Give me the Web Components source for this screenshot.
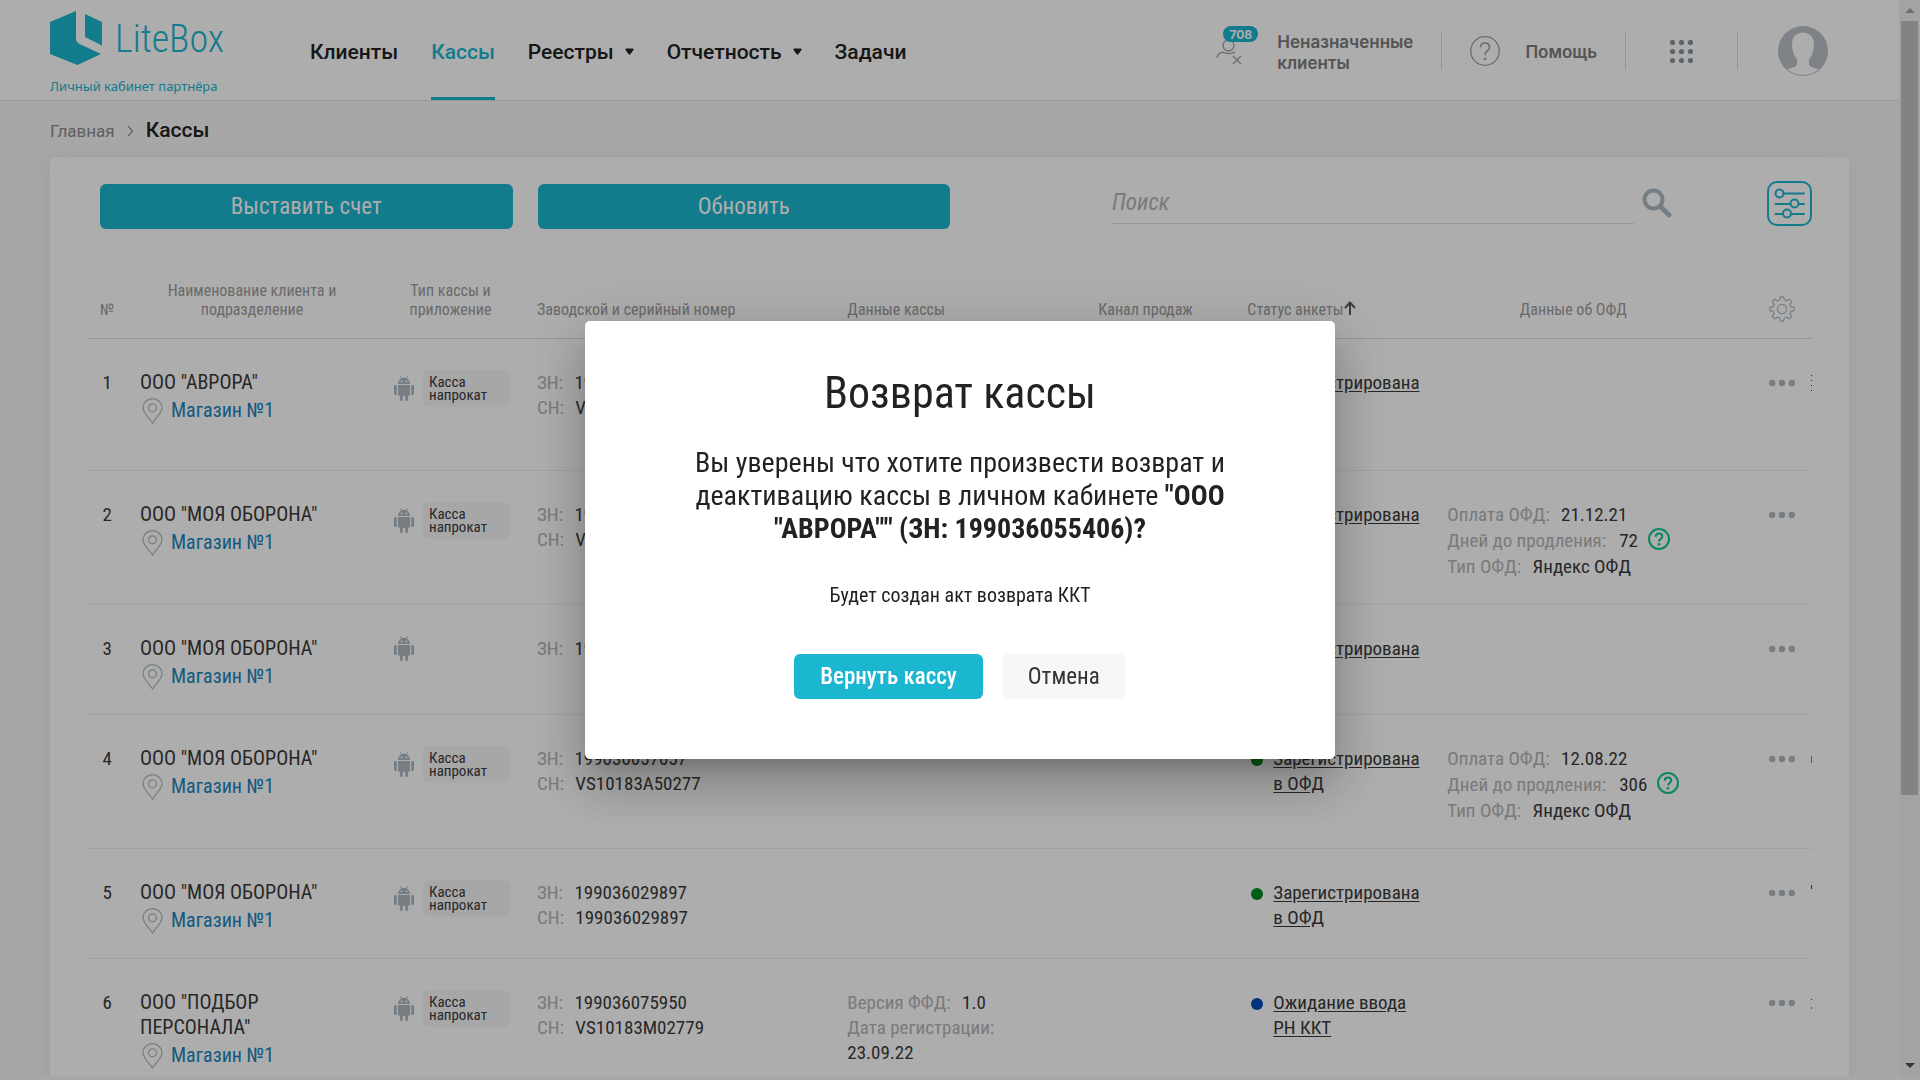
<!DOCTYPE html>
<html lang="ru">
<head>
<meta charset="utf-8">
<meta name="viewport" content="width=device-width, initial-scale=1">
<title>LiteBox — Кассы</title>
<style>
  :root {
    --teal: #1bb6cf;
    --ink: #3a3a3a;
    --muted: #b4b4b4;
    --icon: #aebac2;
    --text: "Roboto Condensed", Roboto, "Liberation Sans", sans-serif;
    --head: Roboto, "Liberation Sans", sans-serif;
  }
  html, body { margin: 0; height: 100%; }
  body { background: #f6f6f6; color: var(--ink); font: 19px/25px var(--text); overflow: hidden; }
</style>
</head>
<body>
<lb-app></lb-app>

<script>
const define = (name, html, setup) => {
  const tpl = document.createElement('template');
  tpl.innerHTML = html;
  customElements.define(name, class extends HTMLElement {
    connectedCallback() {
      if (this.shadowRoot) return;
      this.attachShadow({ mode: 'open' }).append(tpl.content.cloneNode(true));
      if (setup) setup(this, this.shadowRoot);
    }
  });
};

/* ---------- icons ---------- */
const ICONS = {
  logo: ['0 0 52 54', '<path fill="currentColor" d="M0 11 26 0v27c0 3 1 4.500 3.500 6L51 43 27.500 54 0 43zM35 3l17 8v23.500L35 26z"/>'],
  caret: ['0 0 9 7', '<path fill="currentColor" d="M1.500.500h6c1 0 1.300 1 .8 1.800L5.300 6.200c-.4.600-1.200.600-1.600 0L.7 2.300C.2 1.500.5.500 1.500.500z"/>'],
  user: ['0 0 26 26', '<g fill="none" stroke="currentColor" stroke-width="1.300"><circle cx="12.500" cy="7.500" r="5.500"/><path d="M1 20c.5-4 4-6 7-5.500 3 1.500 6 1.500 9 0l2 .3"/><path d="m17 18 8 8m0-8-8 8"/></g>'],
  help: ['0 0 30 30', '<g fill="none" stroke="currentColor" stroke-width="1.300"><circle cx="15" cy="15" r="14.300"/><path stroke-width="1.600" d="M10.500 11.500c0-3 2-4.500 4.500-4.500s4.500 1.600 4.500 4.300c0 3.700-4.500 3.700-4.500 8"/></g><circle cx="15" cy="23" r="1.300" fill="currentColor"/>'],
  grid: ['0 0 23 23', '<g fill="currentColor">' + [2.5, 11.5, 20.5].map(y => [2.5, 11.5, 20.5].map(x => `<circle cx="${x}" cy="${y}" r="2.600"/>`).join('')).join('') + '</g>'],
  avatar: ['0 0 50 50', '<circle cx="25" cy="25" r="25" fill="currentColor"/><path fill="#fff" d="M25 6.500c6 0 11 4 10.800 11 0 3 .4 5-.5 6.500-.8 3.500-2 6.500-4 9-.8 5-.5 7 2 8l7.700 2.300C36.500 46.800 31 49 25 49s-11.500-2.200-16-5.700L16.700 41c2.500-1 3-4 2-8-2-2.500-3.200-5.500-4-9-1-2-.6-4-.5-6.500C14 10.500 19 6.500 25 6.500z"/>'],
  chevron: ['0 0 7 12', '<path fill="none" stroke="currentColor" stroke-width="1.200" d="m1 .8 4.500 5.200L1 11.200"/>'],
  search: ['0 0 30 30', '<circle cx="11.500" cy="11.500" r="9" fill="none" stroke="currentColor" stroke-width="4"/><path stroke="currentColor" stroke-width="4.600" stroke-linecap="round" d="m18.500 18.500 8.500 8.500"/>'],
  filter: ['0 0 45 45', '<g fill="none" stroke="currentColor" stroke-width="2"><rect x="1" y="1" width="43" height="43" rx="9"/><g stroke-linecap="round"><path d="M17 12.500h20M8.500 23H23m9 0h5M8.500 33H15m10 0h12"/></g><circle cx="12.500" cy="12.500" r="4"/><circle cx="27.500" cy="22.500" r="4"/><circle cx="20" cy="32.500" r="4"/></g>'],
  gear: ['0 0 26 26', '<g fill="none" stroke="currentColor" stroke-width="1.200" stroke-linejoin="round"><circle cx="13" cy="13" r="4.600"/><path d="M11.300.8h3.400l.6 3.200 2.300 1 2.700-1.900 2.500 2.500L20.900 8.300l1 2.400 3.200.6v3.400l-3.200.6-1 2.400 1.900 2.700-2.500 2.500-2.700-1.900-2.300 1-.6 3.200h-3.400l-.6-3.200-2.300-1-2.700 1.900-2.500-2.500 1.900-2.700-1-2.400-3.200-.6v-3.400l3.200-.6 1-2.400L3.200 5.600l2.500-2.500L8.400 5l2.300-1z"/></g>'],
  pin: ['0 0 21 26', '<g fill="none" stroke="currentColor" stroke-width="1.200"><path d="M10.500 25C7.500 20 1 15 1 9.800a9.500 9.200 0 0 1 19 0C20 15 13.500 20 10.500 25z"/><circle cx="10.500" cy="9.800" r="4"/></g>'],
  android: ['0 0 20 25', '<g fill="currentColor"><path d="M4 8c0-3 1.600-4.800 3.200-5.600L5.800.4l.5-.4L8 2a7 7 0 0 1 4 0L13.700 0l.5.4-1.400 2C14.400 3.200 16 5 16 8zM4 9h12v9.500c0 .8-.6 1.300-1.300 1.300H5.300C4.600 19.800 4 19.300 4 18.500z"/><rect y="9" width="2.800" height="10" rx="1.200"/><rect x="17.200" y="9" width="2.800" height="10" rx="1.200"/><rect x="6" y="18" width="2.800" height="7" rx="1.200"/><rect x="11.200" y="18" width="2.800" height="7" rx="1.200"/></g><g fill="#fff"><circle cx="7.500" cy="5.300" r=".9"/><circle cx="12.500" cy="5.300" r=".9"/></g>'],
  up: ['0 0 12 14', '<path fill="none" stroke="currentColor" stroke-width="2" d="M6 14V2M1 7l5-5.500L11 7"/>'],
  dots: ['0 0 26 8', '<g fill="currentColor"><circle cx="3.200" cy="4" r="3.200"/><circle cx="13" cy="4" r="3.200"/><circle cx="22.800" cy="4" r="3.200"/></g>'],
  hint: ['0 0 22 22', '<g fill="none" stroke="currentColor" stroke-width="2"><circle cx="11" cy="11" r="10"/><path d="M7.800 8.700c0-2 1.400-3.200 3.200-3.200s3.300 1.200 3.300 3c0 2.300-3.300 2.500-3.300 5"/></g><circle cx="11" cy="16.300" r="1.300" fill="currentColor"/>']
};
define('lb-icon', '<style>:host{display:inline-flex;flex:none}svg{display:block}</style>', (el, root) => {
  const [box, body] = ICONS[el.getAttribute('name')];
  const [, , w, h] = box.split(' ');
  root.innerHTML += `<svg viewBox="${box}" width="${w}" height="${h}" aria-hidden="true">${body}</svg>`;
});

/* ---------- buttons ---------- */
define('lb-button', `
<style>
  :host { display: block; }
  button { box-sizing: border-box; width: 100%; height: 45px; padding: 0 26px; border: 0; border-radius: 6px;
    background: var(--teal); color: #fff; font: var(--weight, 400) 23px/45px var(--text); white-space: nowrap; }
  :host([kind="plain"]) button { background: #f7f7f7; color: #333; }
</style>
<button type="button"><slot></slot></button>`);

/* ---------- header ---------- */
define('lb-nav-item', `
<style>
  :host { display: flex; }
  a { display: flex; align-items: center; gap: 11px; color: #222; text-decoration: none; font: 500 21px/28px var(--head);
    padding-top: 6px; border-bottom: 3px solid transparent; }
  :host([active]) a { color: var(--teal); border-color: var(--teal); }
  lb-icon { display: none; }
  :host([menu]) lb-icon { display: flex; }
</style>
<a href="#"><slot></slot><lb-icon name="caret"></lb-icon></a>`);

define('lb-header', `
<style>
  :host { display: flex; box-sizing: border-box; height: 101px; padding: 0 71px 0 50px; background: #fff; border-bottom: 1px solid #e4e4e4; }
  .logo { flex: 0 0 260px; display: flex; flex-direction: column; padding-top: 11px; color: var(--teal); text-decoration: none; }
  .brand { display: flex; gap: 13px; align-items: flex-start; }
  .word { font: 300 38px/56px var(--text); }
  .sub { margin-top: 10px; font: 13px/18px "Noto Sans", "Open Sans", sans-serif; }
  nav { display: flex; gap: 33px; }
  .tools { margin-left: auto; padding-top: 2px; display: flex; align-items: center; font: 600 17px/21px Inter, var(--head); }
  .tools a { display: flex; align-items: center; color: #7c7c7c; text-decoration: none; }
  .tools a > span { padding-top: 3px; }
  .tools lb-icon { color: #9aa1a8; }
  .who { gap: 35px; }
  .who i { position: relative; display: flex; font-style: normal; }
  .badge { position: absolute; left: 7px; top: -12px; width: 35px; height: 16px; border-radius: 8px; background: var(--teal);
    color: #fff; font: 700 12px/17px Inter, sans-serif; text-align: center; }
  .help { gap: 25px; }
  hr { width: 1px; height: 38px; margin: 0 28px; border: 0; background: #dcdcdc; }
  .tools .apps { margin: 0 16px; color: #8a939c; }
  .tools .face { margin-left: 12px; color: #bcc0c6; }
  button { padding: 0; border: 0; background: none; display: flex; }
</style>
<a class="logo" href="#"><span class="brand"><lb-icon name="logo"></lb-icon><span class="word">LiteBox</span></span><span class="sub">Личный кабинет партнёра</span></a>
<nav>
  <lb-nav-item>Клиенты</lb-nav-item>
  <lb-nav-item active>Кассы</lb-nav-item>
  <lb-nav-item menu>Реестры</lb-nav-item>
  <lb-nav-item menu>Отчетность</lb-nav-item>
  <lb-nav-item>Задачи</lb-nav-item>
</nav>
<div class="tools">
  <a class="who" href="#"><i><lb-icon name="user"></lb-icon><span class="badge">708</span></i><span>Неназначенные<br>клиенты</span></a>
  <hr>
  <a class="help" href="#"><lb-icon name="help"></lb-icon><span>Помощь</span></a>
  <hr>
  <button type="button" aria-label="Приложения"><lb-icon class="apps" name="grid"></lb-icon></button>
  <hr>
  <button type="button" aria-label="Профиль"><lb-icon class="face" name="avatar"></lb-icon></button>
</div>`);

define('lb-breadcrumbs', `
<style>
  :host { display: flex; align-items: baseline; gap: 12px; height: 56px; box-sizing: border-box; padding: 15px 50px 0; font: 500 21px/28px var(--head); color: #222; }
  a { color: #8c8c8c; font: 400 17px/28px var(--head); text-decoration: none; }
  lb-icon { color: #8c8c8c; }
</style>
<a href="#">Главная</a><lb-icon name="chevron"></lb-icon><span>Кассы</span>`);

/* ---------- toolbar ---------- */
define('lb-toolbar', `
<style>
  :host { display: flex; height: 48px; padding: 24px 37px 0 50px; align-items: flex-start; }
  .actions { flex: 850 1 0; display: grid; grid-template-columns: 1fr 1fr; gap: 25px; align-self: flex-end; }
  .search { flex: 560 1 0; display: flex; margin-left: 162px; gap: 8px; color: var(--icon); }
  input { flex: 1; min-width: 0; box-sizing: border-box; height: 43px; padding: 0; border: 0; border-bottom: 1px solid #dedede; background: none;
    font: italic 23px/28px var(--text); color: var(--ink); }
  input::placeholder { color: #b4b4b4; opacity: 1; }
  button { display: flex; padding: 0; border: 0; background: none; color: inherit; }
  .find { padding-top: 7px; }
  .filter { margin-left: 95px; color: var(--teal); }
</style>
<div class="actions"><lb-button>Выставить счет</lb-button><lb-button>Обновить</lb-button></div>
<div class="search"><input type="search" placeholder="Поиск" aria-label="Поиск"><button class="find" type="button" aria-label="Найти"><lb-icon name="search"></lb-icon></button></div>
<button class="filter" type="button" aria-label="Фильтр"><lb-icon name="filter"></lb-icon></button>`);

/* ---------- table ---------- */
const ROWS = [
  { name: 'ООО "АВРОРА"', rent: 1, zn: '199036055406', sn: 'VS10183A50277', st: 'Зарегистрирована в ОФД', tall: 1, edge: 'dots' },
  { name: 'ООО "МОЯ ОБОРОНА"', rent: 1, zn: '199036057657', sn: 'VS10183A50277', st: 'Зарегистрирована в ОФД', ofd: ['21.12.21', 72] },
  { name: 'ООО "МОЯ ОБОРОНА"', zn: '199036029897', st: 'Зарегистрирована в ОФД' },
  { name: 'ООО "МОЯ ОБОРОНА"', rent: 1, zn: '199036057657', sn: 'VS10183A50277', st: 'Зарегистрирована в ОФД', ofd: ['12.08.22', 306], edge: 'arc' },
  { name: 'ООО "МОЯ ОБОРОНА"', rent: 1, zn: '199036029897', sn: '199036029897', st: 'Зарегистрирована в ОФД', edge: 'tick' },
  { name: 'ООО "ПОДБОР ПЕРСОНАЛА"', rent: 1, zn: '199036075950', sn: 'VS10183M02779', st: 'Ожидание ввода РН ККТ', blue: 1, ffd: ['1.0', '23.09.22'], edge: 'pair' }
];
const pair = (l, v) => `<div><span class="l">${l}:</span> ${v}</div>`;
const rowHtml = (r, i) => `<tr class="${r.tall ? 'tall' : ''}">
  <td class="n">${i + 1}</td>
  <td class="name">${r.name}<a class="store" href="#"><lb-icon name="pin"></lb-icon>Магазин №1</a></td>
  <td><div class="type"><lb-icon name="android"></lb-icon>${r.rent ? '<span class="rent">Касса<br>напрокат</span>' : ''}</div></td>
  <td>${pair('ЗН', r.zn)}${r.sn ? pair('СН', r.sn) : ''}</td>
  <td class="data">${r.ffd ? pair('Версия ФФД', r.ffd[0]) + pair('Дата регистрации', r.ffd[1]) : ''}</td>
  <td></td>
  <td><div class="status${r.blue ? ' blue' : ''}"><a href="#">${r.st}</a></div></td>
  <td>${r.ofd ? `<div class="ofd">${pair('Оплата ОФД', r.ofd[0])}<div class="days"><span class="l">Дней до продления:</span>${r.ofd[1]}<lb-icon name="hint"></lb-icon></div>${pair('Тип ОФД', 'Яндекс ОФД')}</div>` : ''}</td>
  <td><div class="act"><button type="button" aria-label="Действия"><lb-icon name="dots"></lb-icon></button><i class="${r.edge || ''}"></i></div></td>
</tr>`;
define('lb-table', `
<style>
  :host { display: block; margin: 52px 37px 0 38px; }
  table { width: 100%; table-layout: fixed; border-collapse: separate; border-spacing: 0; }
  th { padding: 0 0 19px 12px; border-bottom: 1px solid #dedede; vertical-align: bottom; text-align: left; font: 400 16px/19px var(--text); color: #9c9c9c; }
  th.c { text-align: center; padding: 0 4px 19px 0; }
  th.n { text-align: right; padding-right: 17px; }
  th lb-icon { color: #5c5c5c; }
  th.set { text-align: right; padding: 0 17px 12px 0; }
  th.set button { color: var(--icon); } th.set lb-icon { color: inherit; }
  td { padding: 31px 0 22px 12px; border-bottom: 1px solid #f0f0f0; vertical-align: top; }
  .tall td { height: 78px; }
  td.n { text-align: right; padding-right: 16px; padding-left: 0; }
  td.name { padding-right: 40px; font-size: 20px; }
  .l { color: var(--muted); margin-right: 7px; }
  a { color: inherit; text-underline-offset: 2px; }
  .store { display: flex; align-items: center; height: 31px; gap: 8px; padding-left: 2px; color: #1a86c0; text-decoration: none; white-space: nowrap; }
  .store lb-icon, .type lb-icon, .act lb-icon { color: var(--icon); }
  .type { display: flex; align-items: center; gap: 9px; padding-left: 2px; }
  .rent { box-sizing: border-box; width: 87px; height: 37px; padding: 6px 6px 0; border-radius: 6px; background: #f6f6f6; font-size: 15px; line-height: 13px; }
  .data { padding-right: 60px; }
  .status { display: flex; gap: 10px; padding: 0 12px 0 4px; }
  .status a { flex: 1; }
  .status::before { content: ""; flex: none; width: 12px; height: 12px; margin-top: 8px; border-radius: 50%; background: #008a20; }
  .status.blue::before { background: #004bbc; }
  .ofd { padding-bottom: 3px; }
  .days { display: flex; height: 27px; line-height: 27px; }
  .days .l { margin-right: 13px; }
  .days lb-icon { margin: 1px 0 0 10px; color: #10c594; }
  .act { display: flex; justify-content: flex-end; align-items: center; gap: 16px; height: 25px; }
  .act i { width: 1px; height: 16px; }
  .act i.dots { background: repeating-linear-gradient(#444 0 1px, transparent 1px 5px); }
  .act i.arc { background: linear-gradient(transparent 5px, #a97a3a 5px 12px, transparent 12px); }
  .act i.tick { background: linear-gradient(#444 4px, transparent 4px); }
  .act i.pair { background: linear-gradient(transparent 4px, #444 4px 5px, transparent 5px 12px, #1a86c0 12px 14px, transparent 14px); }
  button { padding: 0; border: 0; background: none; display: inline-flex; }
  col:nth-child(1) { width: 40px; } col:nth-child(2) { width: 252px; } col:nth-child(3) { width: 145px; }
  col:nth-child(4) { width: 18%; } col:nth-child(5) { width: 251px; } col:nth-child(6) { width: 149px; }
  col:nth-child(7) { width: 200px; } col:nth-child(8) { width: 280px; }
</style>
<table>
  <colgroup><col><col><col><col><col><col><col><col><col></colgroup>
  <thead><tr>
    <th class="n">№</th><th class="c">Наименование клиента и<br>подразделение</th><th class="c">Тип кассы и<br>приложение</th>
    <th>Заводской и серийный номер</th><th>Данные кассы</th><th>Канал продаж</th><th>Статус анкеты<lb-icon name="up"></lb-icon></th>
    <th class="c">Данные об ОФД</th><th class="set"><button type="button" aria-label="Настройка"><lb-icon name="gear"></lb-icon></button></th>
  </tr></thead>
  <tbody></tbody>
</table>`, (el, root) => { root.querySelector('tbody').innerHTML = ROWS.map(rowHtml).join(''); });

define('lb-card', `
<style>:host { display: block; margin: 0 50px; background: #fff; border-radius: 6px; box-shadow: 0 0 19px rgba(0,0,0,.06); padding-bottom: 40px; }</style>
<slot></slot>`);

/* ---------- scroll rail ---------- */
define('lb-rail', `
<style>
  :host { display: flex; flex-direction: column; flex: 0 0 21px; background: #f1f1f1; }
  .end { height: 21px; display: flex; align-items: center; justify-content: center; }
  .end::before { content: ""; border: 5px solid transparent; }
  .up::before { border-top: 0; border-bottom-color: #a3a3a3; }
  .down::before { border-bottom: 0; border-top-color: #505050; }
  .track { flex: 1; display: flex; flex-direction: column; padding: 0 2px; }
  .thumb { flex: 773; background: #c1c1c1; }
  .rest { flex: 260; }
</style>
<div class="end up"></div><div class="track"><div class="thumb"></div><div class="rest"></div></div><div class="end down"></div>`);

/* ---------- modal ---------- */
define('lb-modal', `
<style>
  :host { position: fixed; inset: 0; display: flex; align-items: center; justify-content: center; background: rgba(0,0,0,.32); }
  dialog { position: static; box-sizing: border-box; width: 750px; margin: 0; padding: 46px 90px 60px; border: 0; border-radius: 5px; background: #fff; color: #222; text-align: center;
    box-shadow: 0 14px 19px -9px rgba(0,0,0,.2), 0 30px 48px 4px rgba(0,0,0,.14), 0 11px 58px 10px rgba(0,0,0,.12); }
  h2 { margin: 0; font: 400 44px/52px var(--text); }
  .ask { margin: 27px 0 0; font-size: 28px; line-height: 33px; }
  .note { margin: 38px 0 0; font-size: 20px; line-height: 24px; }
  .row { display: flex; justify-content: center; gap: 19px; margin-top: 47px; }
  .main { --weight: 500; }
</style>
<dialog open aria-labelledby="t">
  <h2 id="t">Возврат кассы</h2>
  <p class="ask"><slot></slot></p>
  <p class="note"><slot name="note"></slot></p>
  <div class="row"><lb-button class="main">Вернуть кассу</lb-button><lb-button kind="plain">Отмена</lb-button></div>
</dialog>`);

/* ---------- page ---------- */
define('lb-app', `
<style>
  :host { display: flex; height: 100vh; box-sizing: border-box; padding-bottom: 4px; }
  main { flex: 1; min-width: 0; overflow: hidden; }
</style>
<main><lb-header></lb-header><lb-breadcrumbs></lb-breadcrumbs><lb-card><lb-toolbar></lb-toolbar><lb-table></lb-table></lb-card></main>
<lb-rail></lb-rail>
<lb-modal>Вы уверены что хотите произвести возврат и деактивацию кассы в личном кабинете <b>"ООО "АВРОРА"" (ЗН: 199036055406)?</b><span slot="note">Будет создан акт возврата ККТ</span></lb-modal>`);
</script>
</body>
</html>
